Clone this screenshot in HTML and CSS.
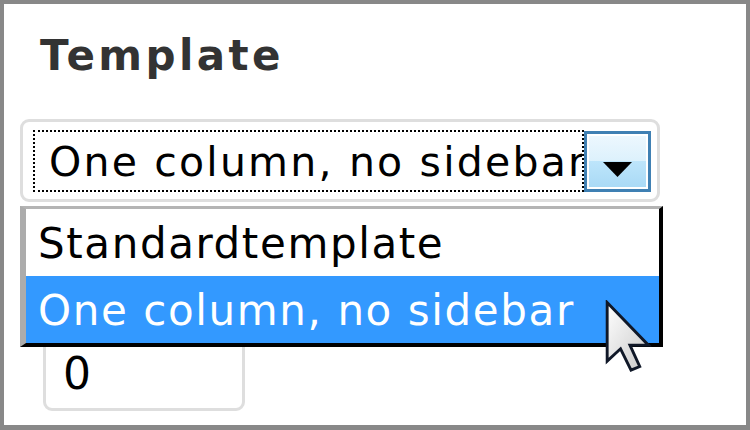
FILE: index.html
```html
<!DOCTYPE html>
<html>
<head>
<meta charset="utf-8">
<link rel="stylesheet" href="styles.css">
</head>
<body>
<div class="frame">
  <h2 class="title">Template</h2>
  <div class="field">
    <div class="select">
      <div class="focus">One column, no sidebar</div>
      <div class="btn">
        <svg class="arrow" width="29" height="15" viewBox="0 0 29 15"><polygon points="0,0 29,0 14.5,15" fill="#000"/></svg>
      </div>
    </div>
    <ul class="list">
      <li class="item">Standardtemplate</li>
      <li class="item selected">One column, no sidebar</li>
    </ul>
  </div>
  <div class="input">0</div>
  <svg class="cursor" width="47" height="73" viewBox="0 0 13 20">
    <defs>
      <linearGradient id="cg" x1="0" y1="0" x2="1" y2="1">
        <stop offset="0" stop-color="#ffffff"/>
        <stop offset="1" stop-color="#c8c8c8"/>
      </linearGradient>
    </defs>
    <polygon points="0.6,0.6 0.6,16.8 4.3,13.4 7.2,19.3 9.6,18.3 6.9,12.4 12,12.4" fill="url(#cg)" stroke="#101828" stroke-width="0.8" stroke-linejoin="miter"/>
  </svg>
</div>
</body>
</html>
```
FILE: styles.css
```css
* { box-sizing: border-box; }
html, body { margin: 0; padding: 0; background: #fff; }
.frame {
  position: relative;
  width: 750px;
  height: 430px;
  border: 4px solid #888888;
  border-bottom-width: 5px;
  background: #fff;
  overflow: hidden;
  font-family: "DejaVu Sans", Verdana, sans-serif;
}
.title {
  margin: 31px 0 0 36px;
  font-size: 42px;
  line-height: 42px;
  font-weight: bold;
  color: #333333;
  letter-spacing: 3.4px;
}
.field {
  position: relative;
  margin: 42px 0 0 16px;
  width: 643px;
}
.select {
  display: flex;
  width: 640px;
  height: 83px;
  border: 3px solid #dedede;
  border-radius: 9px;
  padding: 8px 6px 7px 10px;
  background: #fff;
}
.focus {
  width: 552px;
  height: 62px;
  border: 2px dotted #000;
  padding: 1px 0 0 14px;
  font-size: 41px;
  line-height: 58px;
  letter-spacing: 2.2px;
  color: #000;
  white-space: nowrap;
  overflow: hidden;
}
.btn {
  width: 67px;
  height: 61px;
  margin-top: 1px;
  border: 3px solid #3f80b3;
  box-shadow: inset 0 0 0 2px #ffffff;
  background: linear-gradient(to bottom, #eef8fe 0%, #dcf1fc 50%, #bde5fb 50%, #a8d9f5 100%);
  display: flex;
  justify-content: center;
  align-items: flex-start;
  padding-top: 28px;
}
.arrow { display: block; }
.list {
  position: absolute;
  top: 87px;
  left: 0;
  width: 643px;
  height: 141px;
  margin: 0;
  padding: 0;
  list-style: none;
  background: #fff;
  border-left: 6px solid #acacac;
  border-top: 3px solid #b4b4b4;
  border-right: 4px solid #000;
  border-bottom: 4px solid #000;
  z-index: 2;
}
.item {
  height: 67px;
  padding: 2px 0 0 12px;
  font-size: 42px;
  line-height: 65px;
  letter-spacing: 1.6px;
  color: #000;
  white-space: nowrap;
}
.item.selected {
  background: #3399ff;
  color: #fff;
}
.input {
  margin: 132px 0 0 39px;
  width: 202px;
  height: 77px;
  border: 3px solid #dedede;
  border-radius: 9px;
  padding: 2px 0 0 17px;
  font-size: 44px;
  line-height: 69px;
  color: #000;
}
.cursor {
  position: absolute;
  left: 601px;
  top: 296px;
  z-index: 3;
}
```
